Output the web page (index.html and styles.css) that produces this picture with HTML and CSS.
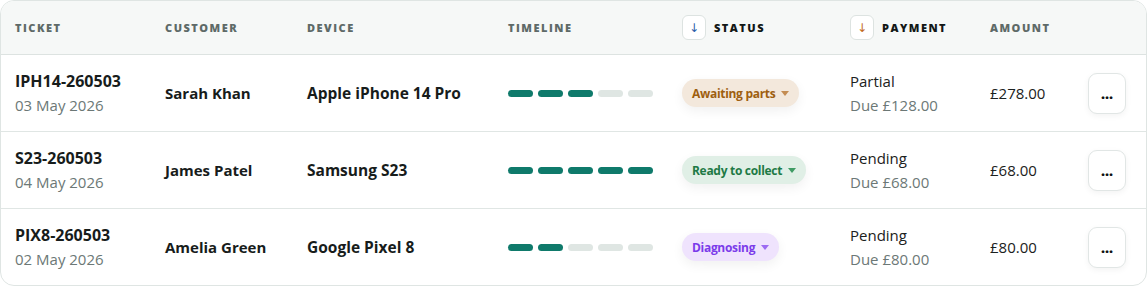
FILE: index.html
```html
<!DOCTYPE html>
<html lang="en">
<head>
<meta charset="utf-8">
<title>Repairs</title>
<link rel="stylesheet" href="styles.css">
</head>
<body>
<div class="card">
  <div class="row head">
    <div class="th">TICKET</div>
    <div class="th">CUSTOMER</div>
    <div class="th">DEVICE</div>
    <div class="th">TIMELINE</div>
    <div class="th sorted"><span class="sort sort-blue">↓</span>STATUS</div>
    <div class="th sorted"><span class="sort sort-orange">↓</span>PAYMENT</div>
    <div class="th">AMOUNT</div>
    <div class="th"></div>
  </div>

  <div class="row">
    <div class="two"><span class="id">IPH14-260503</span><span class="sub">03 May 2026</span></div>
    <div class="strong">Sarah Khan</div>
    <div class="strong device">Apple iPhone 14 Pro</div>
    <div class="timeline"><i class="on"></i><i class="on"></i><i class="on"></i><i></i><i></i></div>
    <div><span class="pill pill-amber">Awaiting parts<b class="tri"></b></span></div>
    <div class="two"><span class="pay">Partial</span><span class="sub">Due £128.00</span></div>
    <div class="amount">£278.00</div>
    <div><button class="more">...</button></div>
  </div>

  <div class="row">
    <div class="two"><span class="id">S23-260503</span><span class="sub">04 May 2026</span></div>
    <div class="strong">James Patel</div>
    <div class="strong device">Samsung S23</div>
    <div class="timeline"><i class="on"></i><i class="on"></i><i class="on"></i><i class="on"></i><i class="on"></i></div>
    <div><span class="pill pill-green">Ready to collect<b class="tri"></b></span></div>
    <div class="two"><span class="pay">Pending</span><span class="sub">Due £68.00</span></div>
    <div class="amount">£68.00</div>
    <div><button class="more">...</button></div>
  </div>

  <div class="row last">
    <div class="two"><span class="id">PIX8-260503</span><span class="sub">02 May 2026</span></div>
    <div class="strong">Amelia Green</div>
    <div class="strong device">Google Pixel 8</div>
    <div class="timeline"><i class="on"></i><i class="on"></i><i></i><i></i><i></i></div>
    <div><span class="pill pill-purple">Diagnosing<b class="tri"></b></span></div>
    <div class="two"><span class="pay">Pending</span><span class="sub">Due £80.00</span></div>
    <div class="amount">£80.00</div>
    <div><button class="more">...</button></div>
  </div>
</div>
</body>
</html>
```

FILE: styles.css
```css
* { box-sizing: border-box; }
html, body { margin: 0; padding: 0; background: #ffffff; }
body {
  font-family: "Open Sans", "Noto Sans", sans-serif;
  color: #1b2120;
  width: 1148px;
  height: 286px;
}
.card {
  width: 1147px;
  border: 1px solid #dfe5e3;
  border-radius: 14px;
  overflow: hidden;
  background: #fff;
}
.row {
  display: grid;
  grid-template-columns: 150px 142px 201px 174px 168px 140px 98px 1fr;
  align-items: center;
  padding: 0 20px 0 14px;
  height: 77px;
  border-bottom: 1px solid #e0e6e4;
}
.row.last { border-bottom: none; height: 76px; }
.row.head {
  height: 54px;
  background: #f6f8f7;
  border-bottom: 1px solid #dde3e1;
}
.th {
  font-size: 11px;
  font-weight: 800;
  letter-spacing: 1.5px;
  color: #5e6a68;
  display: flex;
  align-items: center;
}
.th.sorted { color: #121716; }
.sort {
  width: 24px;
  height: 25px;
  border: 1px solid #dde3e1;
  border-radius: 6px;
  background: #fff;
  display: inline-flex;
  align-items: center;
  justify-content: center;
  font-family: "DejaVu Sans", sans-serif;
  font-size: 12px;
  font-weight: 400;
  letter-spacing: 0;
  margin-right: 8px;
  padding-top: 1px;
}
.sort-blue { color: #2b5da8; }
.sort-orange { color: #c2691a; }
.two { display: flex; flex-direction: column; }
.id { font-size: 16px; font-weight: 700; line-height: 24px; color: #171c1b; }
.sub { font-size: 15px; line-height: 24px; color: #6c7876; }
.pay { font-size: 15px; line-height: 24px; color: #1b2120; }
.strong { font-size: 15px; font-weight: 700; color: #171c1b; }
.strong.device { font-size: 15.5px; }
.amount { font-size: 15px; color: #1b2120; }
.timeline { display: flex; gap: 5px; }
.timeline i {
  display: block;
  width: 25px;
  height: 7px;
  border-radius: 4px;
  background: #dfe6e3;
}
.timeline i.on { background: #0f7a6b; }
.pill {
  display: inline-flex;
  align-items: center;
  height: 28px;
  padding: 0 10px;
  border-radius: 14px;
  font-size: 12px;
  font-weight: 700;
  letter-spacing: -0.3px;
  box-shadow: 0 4px 12px rgba(0, 0, 0, 0.06);
}
.tri {
  width: 0;
  height: 0;
  border-left: 4px solid transparent;
  border-right: 4px solid transparent;
  border-top: 5px solid currentColor;
  margin-left: 6px;
}
.pill-amber { background: #f3e8dc; color: #9e5f10; }
.pill-amber .tri { border-top-color: #c48c52; }
.pill-green { background: #e0efe6; color: #1d7a45; }
.pill-green .tri { border-top-color: #3f9b64; }
.pill-purple { background: #efe3fd; color: #7b3bea; }
.pill-purple .tri { border-top-color: #9c6bf2; }
.more {
  width: 38px;
  height: 41px;
  border: 1px solid #e1e6e5;
  border-radius: 9px;
  background: #fff;
  font-family: "Open Sans", sans-serif;
  font-size: 14px;
  font-weight: 800;
  color: #111;
  padding: 0;
  box-shadow: 0 2px 6px rgba(0, 0, 0, 0.05);
  display: block;
}
```
